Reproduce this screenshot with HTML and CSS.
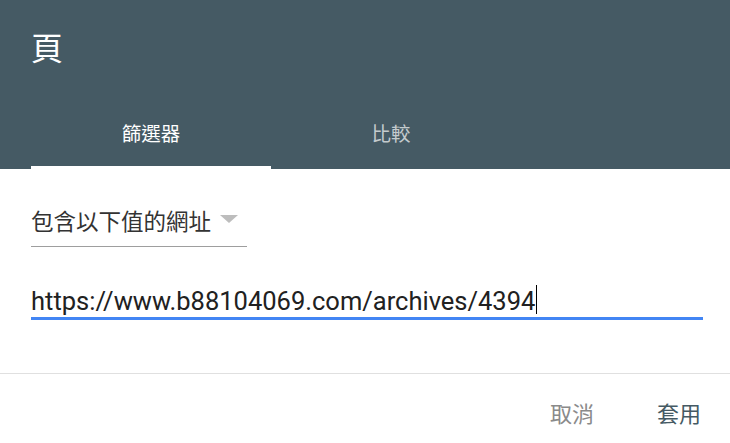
FILE: index.html
```html
<!DOCTYPE html>
<html lang="zh-Hant">
<head>
<meta charset="utf-8">
<title>頁</title>
<link rel="stylesheet" href="styles.css">
</head>
<body>
<div class="dialog">
  <header class="header">
    <h1 class="title">頁</h1>
    <nav class="tabs">
      <div class="tab active">篩選器</div>
      <div class="tab">比較</div>
    </nav>
  </header>
  <section class="content">
    <div class="select">
      <span class="select-label">包含以下值的網址</span>
      <span class="caret"></span>
    </div>
    <div class="input">
      <span class="input-text">https://www.b88104069.com/archives/4394</span><span class="cursor"></span>
    </div>
  </section>
  <footer class="actions">
    <button class="btn cancel">取消</button>
    <button class="btn apply">套用</button>
  </footer>
</div>
</body>
</html>
```

FILE: styles.css
```css
html, body {
  margin: 0;
  padding: 0;
  background: #ffffff;
}
body {
  width: 730px;
  height: 443px;
  overflow: hidden;
  font-family: "Noto Sans CJK TC", "Noto Sans", Roboto, sans-serif;
}
.dialog {
  display: flex;
  flex-direction: column;
}
.header {
  background: #455a64;
  height: 169px;
  padding-left: 31px;
  box-sizing: border-box;
  display: flex;
  flex-direction: column;
}
.title {
  margin: 0;
  padding-top: 26px;
  height: 97px;
  box-sizing: border-box;
  font-size: 32px;
  line-height: 40px;
  font-weight: 400;
  color: #ffffff;
}
.tabs {
  display: flex;
  height: 72px;
}
.tab {
  width: 240px;
  box-sizing: border-box;
  display: flex;
  align-items: center;
  justify-content: center;
  padding-top: 2px;
  border-bottom: 3px solid transparent;
  font-size: 19.5px;
  color: rgba(255, 255, 255, 0.7);
}
.tab.active {
  color: #ffffff;
  border-bottom-color: #ffffff;
}
.content {
  padding: 35px 27px 53px 31px;
  border-bottom: 1px solid #e0e0e0;
}
.select {
  width: 216px;
  height: 43px;
  box-sizing: border-box;
  display: flex;
  align-items: flex-start;
  border-bottom: 1px solid #9e9e9e;
}
.select-label {
  font-size: 22.5px;
  line-height: 32px;
  color: #333333;
}
.caret {
  width: 0;
  height: 0;
  margin-left: 9px;
  margin-top: 11px;
  border-left: 9px solid transparent;
  border-right: 9px solid transparent;
  border-top: 8px solid #bdbdbd;
}
.input {
  margin-top: 38px;
  height: 35px;
  box-sizing: border-box;
  border-bottom: 3px solid #4285f4;
  display: flex;
  align-items: flex-start;
}
.input-text {
  font-family: Roboto, "Liberation Sans", sans-serif;
  font-size: 25.5px;
  line-height: 32px;
  color: #212121;
}
.cursor {
  width: 1px;
  height: 29px;
  margin-left: 1px;
  background: #000000;
}
.actions {
  display: flex;
  justify-content: flex-end;
  gap: 63px;
  padding: 22px 29px 0 0;
}
.btn {
  border: 0;
  background: none;
  padding: 0;
  margin: 0;
  font-family: "Noto Sans CJK TC", sans-serif;
  font-size: 22px;
  line-height: 32px;
}
.cancel {
  color: #8a8a8a;
}
.apply {
  color: #455a64;
}
```
